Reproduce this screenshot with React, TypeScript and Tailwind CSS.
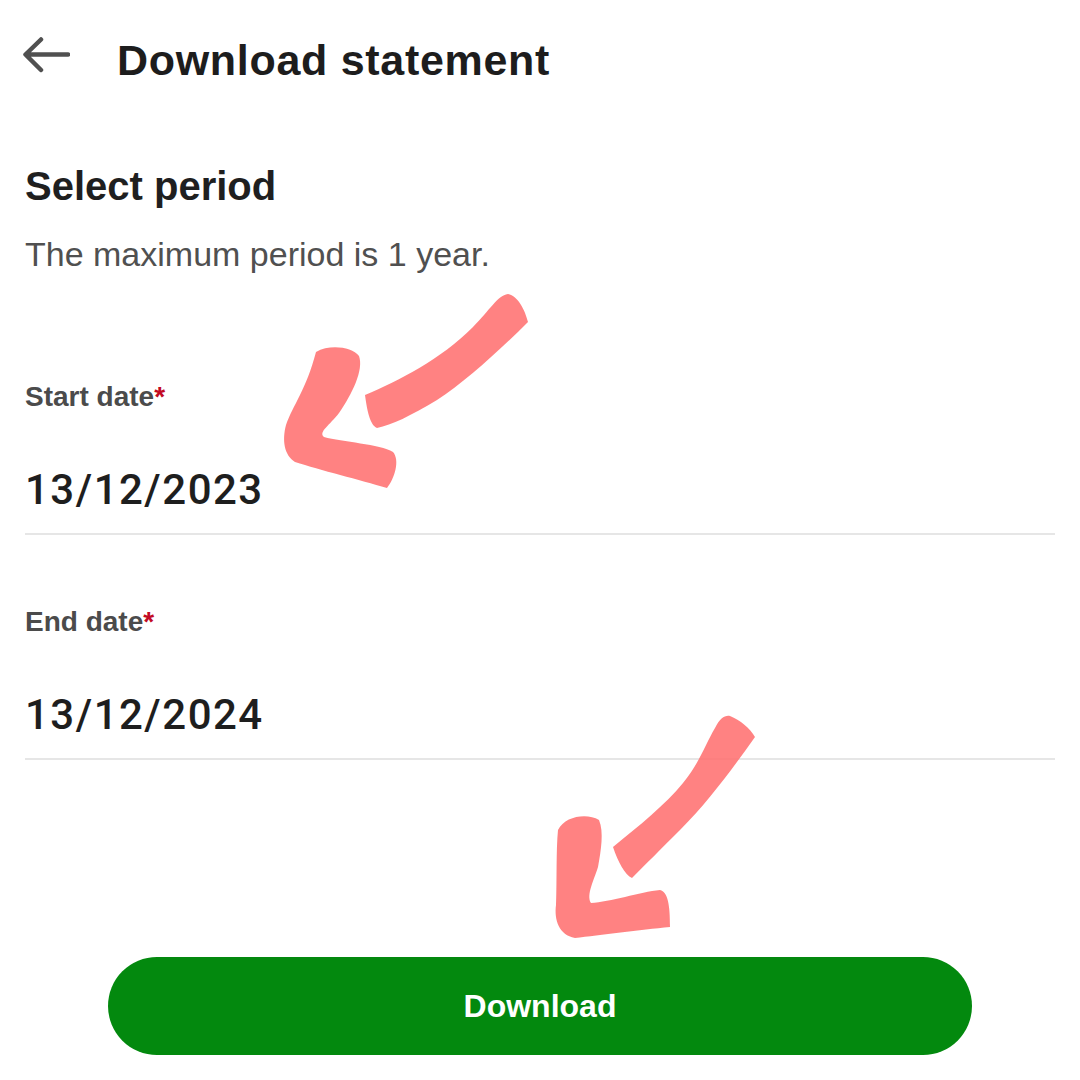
import React from "react";

const sans = { fontFamily: '"Liberation Sans", Arial, sans-serif' };
const digits = { fontFamily: 'Roboto, "Liberation Sans", sans-serif' };

function Field({ label, value, first }: { label: string; value: string; first?: boolean }) {
  return (
    <div className={first ? "mt-[112px]" : "mt-[73px]"}>
      <div className="text-[28px] leading-none font-bold text-[#4b4b4b]" style={sans}>
        {label}
        <span className="text-[#c20a24]">*</span>
      </div>
      <div
        className="mt-[58px] text-[42px] leading-none font-medium tracking-[1.5px] text-[#1e1e1e]"
        style={digits}
      >
        {value}
      </div>
      <div className="mt-[22px] h-[2px] bg-[#e6e6e6]" />
    </div>
  );
}

export default function App() {
  return (
    <div className="relative w-[1080px] h-[1080px] bg-white overflow-hidden" style={sans}>
      <div className="flex items-start pt-[37px] pl-[22px]">
        <svg width="48" height="36" viewBox="0 0 48 36" fill="none">
          <path
            d="M46 17.5H4M19 2.5L3.5 17.5L19 33"
            stroke="#505050"
            strokeWidth="4.5"
            strokeLinecap="round"
            strokeLinejoin="round"
          />
        </svg>
        <h1 className="ml-[47px] mt-[2px] text-[43px] leading-none font-bold tracking-[0.7px] text-[#1d1d1d]">
          Download statement
        </h1>
      </div>

      <div className="pl-[25px] pr-[25px]">
        <h2 className="mt-[84px] text-[40px] leading-none font-bold text-[#1f1f1f]">Select period</h2>
        <p className="mt-[31px] text-[34px] leading-none text-[#505050]">The maximum period is 1 year.</p>

        <Field label="Start date" value="13/12/2023" first />
        <Field label="End date" value="13/12/2024" />
      </div>

      <div className="mt-[197px] flex justify-center">
        <button className="w-[864px] h-[98px] rounded-full bg-[#03890e] text-white text-[32px] font-bold leading-none flex items-center justify-center">
          Download
        </button>
      </div>

      <svg
        className="absolute inset-0 pointer-events-none"
        width="1080"
        height="1080"
        viewBox="0 0 1080 1080"
      >
        <g fill="#ff6e6e" fillOpacity="0.86">
          <path d="M365,395 C400,380 440,360 473,327 C490,310 497,296 508,294 C518,296 525,310 528,322 C500,350 465,382 437,400 C410,416 392,425 377,428 C370,425 367,410 365,395 Z" />
          <path d="M316,352 C330,344 352,347 359,356 C364,370 352,394 339,413 C330,425 318,432 324,437 C342,442 380,444 393,452 C400,460 395,478 387,488 C360,480 320,470 295,462 C284,455 282,440 286,425 C293,405 306,390 316,352 Z" />
          <path d="M613,847 C640,825 665,805 683,783 C700,762 705,745 715,728 C720,718 725,715 730,716 C740,720 750,728 755,737 C735,765 710,800 680,830 C660,850 645,865 632,878 C625,875 618,862 613,847 Z" />
          <path d="M558,830 C565,816 587,813 599,820 C604,832 601,850 598,867 C594,880 586,895 591,903 C610,902 640,892 660,890 C668,892 670,905 670,927 C640,930 600,935 575,938 C559,935 554,920 556,905 C557,880 556,850 558,830 Z" />
        </g>
      </svg>
    </div>
  );
}
